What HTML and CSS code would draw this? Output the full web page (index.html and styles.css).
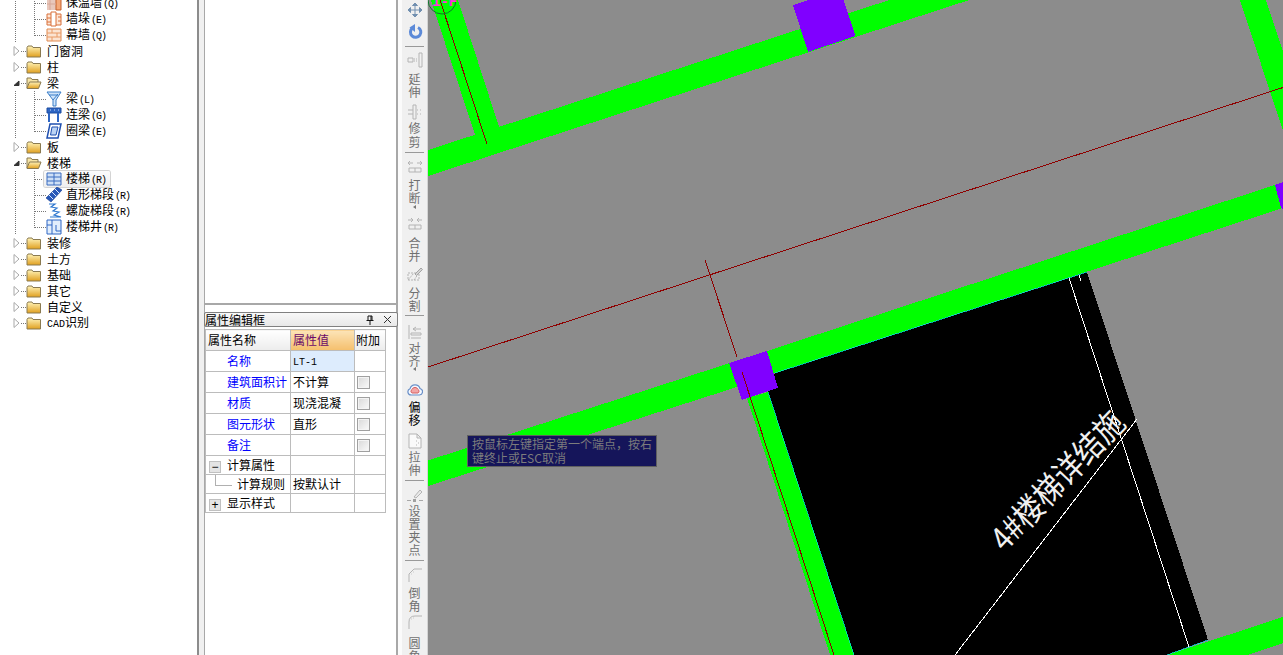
FILE: index.html
```html
<!DOCTYPE html>
<html lang="zh">
<head>
<meta charset="utf-8">
<title>属性编辑框</title>
<link rel="stylesheet" href="styles.css">
</head>
<body>
<svg class="defs" width="0" height="0" aria-hidden="true">
  <defs>
    <linearGradient id="fold" x1="0" y1="0" x2="0" y2="1"><stop offset="0" stop-color="#fff3b8"/><stop offset="1" stop-color="#e0a020"/></linearGradient>
    <symbol id="closed" viewBox="0 0 16 16"><path d="M1 4.500 2 3h4l1 1.500h7.500V14H1z" fill="url(#fold)" stroke="#8a7a50"/></symbol>
    <symbol id="open" viewBox="0 0 16 16"><path d="M1 13V3h4l1 1.500h6V7" fill="#f7e6a8" stroke="#8a7a50"/><path d="M1 13 3.500 7H15l-2.500 6.500H1z" fill="url(#fold)" stroke="#8a7a50"/></symbol>
    <symbol id="tri" viewBox="0 0 7 10"><path d="M1 .5 6 5 1 9.500z" fill="#fff" stroke="#a8a8a8"/></symbol>
    <symbol id="triopen" viewBox="0 0 7 10"><path d="M1 7.500 6 3v4.500z" fill="#333" stroke="#333"/></symbol>
    <symbol id="brick" viewBox="0 0 16 16"><path d="M1 2h14v12H1z" fill="#fbe3d2" stroke="#e08a50"/><path d="M1 6h14M1 10h14M6 2v4M11 6v4M6 10v4" stroke="#e89a66" fill="none"/></symbol>
    <symbol id="pier" viewBox="0 0 16 16"><path d="M1 3h14v11H1z" fill="#fde6d6" stroke="#d9703a"/><path d="M5 1h5v14H5z" fill="#fff" stroke="#d9703a"/><path d="M12 6h3M12 10h3M1 7h4M1 11h4" stroke="#d9703a"/></symbol>
    <symbol id="warm" viewBox="0 0 16 16"><path d="M1 0h9v15H1z" fill="#e8c8bc"/><path d="M10 0h5v15h-5z" fill="#f4a878" stroke="#c4602c"/><path d="M1 4h9M1 9h9M4 0v15" stroke="#d8a898"/></symbol>
    <symbol id="beam" viewBox="0 0 16 16"><path d="M1 1h14L10 9v6H7V9z" fill="#cfe4fa" stroke="#3a7ec8"/><path d="M3 4h9M7 9l5-6" stroke="#3a7ec8" fill="none"/></symbol>
    <symbol id="link" viewBox="0 0 16 16"><path d="M1 1h14v5H1z" fill="#2e66c4" stroke="#1c4ca0"/><path d="M3 6v9M12 6v9" stroke="#2e66c4" stroke-width="2"/><path d="M4 3h1M8 3h1M12 3h1" stroke="#cfe0ff"/></symbol>
    <symbol id="ring" viewBox="0 0 16 16"><path d="M4 1h11l-3 14H1z" fill="#fff" stroke="#2050b0" stroke-width="1.500"/><path d="M6 4h6l-2 8H4.500z" fill="#bcd4f4" stroke="#2050b0"/></symbol>
    <symbol id="stair" viewBox="0 0 16 16"><path d="M1 2h14v12H1z" fill="#cfe0f6" stroke="#3a6cc0"/><path d="M1 6h14M1 10h14M8 2v12" stroke="#3a6cc0" fill="none"/></symbol>
    <symbol id="flight" viewBox="0 0 16 16"><path d="M0 11 11 0l5 3L5 15z" fill="#2858b8" stroke="#143c90" stroke-width=".6"/><path d="M3 8l4 4M6 5l4 4M9 2l4 4" stroke="#dbe8ff"/></symbol>
    <symbol id="spiral" viewBox="0 0 16 16"><path d="M3 1h6L5 4l6 1-4 3 6 1-5 3 7 2H4" fill="none" stroke="#2f78d0" stroke-width="1.200"/></symbol>
    <symbol id="well" viewBox="0 0 16 16"><path d="M1 1h14v14H1z" fill="#e2eefc" stroke="#2e66c4"/><path d="M1 6h5M6 1v14M10 6v6h5" stroke="#2e66c4" fill="none"/></symbol>
  </defs>
</svg>
<div class="app">
  <nav class="tree">
    <div class="row kid"><svg class="ico"><use href="#warm"/></svg><span class="lbl">保温墙<i>(Q)</i></span></div>
    <div class="row kid"><svg class="ico"><use href="#pier"/></svg><span class="lbl">墙垛<i>(E)</i></span></div>
    <div class="row kid last"><svg class="ico"><use href="#brick"/></svg><span class="lbl">幕墙<i>(Q)</i></span></div>
    <div class="row top"><svg class="exp"><use href="#tri"/></svg><svg class="ico"><use href="#closed"/></svg><span class="lbl">门窗洞</span></div>
    <div class="row top"><svg class="exp"><use href="#tri"/></svg><svg class="ico"><use href="#closed"/></svg><span class="lbl">柱</span></div>
    <div class="row top"><svg class="exp"><use href="#triopen"/></svg><svg class="ico"><use href="#open"/></svg><span class="lbl">梁</span></div>
    <div class="row kid"><svg class="ico"><use href="#beam"/></svg><span class="lbl">梁<i>(L)</i></span></div>
    <div class="row kid"><svg class="ico"><use href="#link"/></svg><span class="lbl">连梁<i>(G)</i></span></div>
    <div class="row kid last"><svg class="ico"><use href="#ring"/></svg><span class="lbl">圈梁<i>(E)</i></span></div>
    <div class="row top"><svg class="exp"><use href="#tri"/></svg><svg class="ico"><use href="#closed"/></svg><span class="lbl">板</span></div>
    <div class="row top"><svg class="exp"><use href="#triopen"/></svg><svg class="ico"><use href="#open"/></svg><span class="lbl">楼梯</span></div>
    <div class="row kid"><span class="hi"><svg class="ico"><use href="#stair"/></svg><span class="lbl">楼梯<i>(R)</i></span></span></div>
    <div class="row kid"><svg class="ico"><use href="#flight"/></svg><span class="lbl">直形梯段<i>(R)</i></span></div>
    <div class="row kid"><svg class="ico"><use href="#spiral"/></svg><span class="lbl">螺旋梯段<i>(R)</i></span></div>
    <div class="row kid last"><svg class="ico"><use href="#well"/></svg><span class="lbl">楼梯井<i>(R)</i></span></div>
    <div class="row top"><svg class="exp"><use href="#tri"/></svg><svg class="ico"><use href="#closed"/></svg><span class="lbl">装修</span></div>
    <div class="row top"><svg class="exp"><use href="#tri"/></svg><svg class="ico"><use href="#closed"/></svg><span class="lbl">土方</span></div>
    <div class="row top"><svg class="exp"><use href="#tri"/></svg><svg class="ico"><use href="#closed"/></svg><span class="lbl">基础</span></div>
    <div class="row top"><svg class="exp"><use href="#tri"/></svg><svg class="ico"><use href="#closed"/></svg><span class="lbl">其它</span></div>
    <div class="row top"><svg class="exp"><use href="#tri"/></svg><svg class="ico"><use href="#closed"/></svg><span class="lbl">自定义</span></div>
    <div class="row top"><svg class="exp"><use href="#tri"/></svg><svg class="ico"><use href="#closed"/></svg><span class="lbl"><b>CAD</b>识别</span></div>
  </nav>

  <section class="mid">
    <div class="list"></div>
    <div class="prop">
      <header class="title">
        <span class="title-text">属性编辑框</span>
        <svg class="pin" viewBox="0 0 10 10"><path d="M3 1h4v4.500H3zM1.500 5.500h7M5 5.500V10M6 1v4.500" fill="none" stroke="#111"/></svg>
        <svg class="close" viewBox="0 0 9 9"><path d="M1 1l7 7M8 1 1 8" stroke="#333" fill="none"/></svg>
      </header>
      <table class="grid">
        <thead>
          <tr class="h21"><th class="c1">属性名称</th><th class="c2">属性值</th><th class="c3">附加</th></tr>
        </thead>
        <tbody>
          <tr class="h21"><td class="nm">名称</td><td class="val active"><span class="mono">LT-1</span></td><td></td></tr>
          <tr class="h21"><td class="nm">建筑面积计</td><td class="val">不计算</td><td class="chk"><span class="box"></span></td></tr>
          <tr class="h21"><td class="nm">材质</td><td class="val">现浇混凝</td><td class="chk"><span class="box"></span></td></tr>
          <tr class="h21"><td class="nm">图元形状</td><td class="val">直形</td><td class="chk"><span class="box"></span></td></tr>
          <tr class="h21"><td class="nm">备注</td><td class="val"></td><td class="chk"><span class="box"></span></td></tr>
          <tr class="h19"><td class="grp"><span class="tog">−</span>计算属性</td><td></td><td></td></tr>
          <tr class="h19"><td class="rule">计算规则</td><td class="val">按默认计</td><td></td></tr>
          <tr class="h19"><td class="grp"><span class="tog">+</span>显示样式</td><td></td><td></td></tr>
        </tbody>
      </table>
    </div>
  </section>

  <aside class="bar">
    <svg class="tico t-move" viewBox="0 0 16 16"><path d="M8 1v14M1 8h14M8 1 5.500 3.500h5zM8 15l-2.500-2.500h5zM1 8l2.500-2.500v5zM15 8l-2.500-2.500v5z" fill="#7290b0" stroke="#7290b0"/></svg>
    <svg class="tico t-undo" viewBox="0 0 16 16"><path d="M11 3.500A5.200 5.200 0 1 1 5.500 4" fill="none" stroke="#5c8ad8" stroke-width="3"/><path d="M8 0v8L2.500 3.500z" fill="#5c8ad8"/></svg>
    <hr class="sep s1">
    <div class="tool t1"><svg class="tico" viewBox="0 0 16 16"><path d="M12 1h3v14h-3zM1 6h5v4H1zM7 7h1M9 7h1M7 9h1M9 9h1" fill="none" stroke="#b4b4b4"/></svg><span class="tx">延伸</span></div>
    <div class="tool t2"><svg class="tico" viewBox="0 0 16 16"><path d="M6 1h3v14H6zM1 6h5M1 10h5M10 6h1M13 6h1M10 10h1M13 10h1" fill="none" stroke="#b4b4b4"/></svg><span class="tx">修剪</span></div>
    <hr class="sep s2">
    <div class="tool t3"><svg class="tico" viewBox="0 0 16 16"><path d="M1 4h5M1 4l2-2M1 4l2 2M15 4h-5M15 4l-2-2M15 4l-2 2M2 9h12v4H2zM8 9v4" fill="none" stroke="#b4b4b4"/></svg><span class="tx">打断</span><span class="arr"></span></div>
    <div class="tool t4"><svg class="tico" viewBox="0 0 16 16"><path d="M6 4H1M6 4 4 2M6 4 4 6M10 4h5M10 4l2-2M10 4l2 2M2 9h12v4H2zM8 9v4" fill="none" stroke="#b4b4b4"/></svg><span class="tx">合并</span></div>
    <div class="tool t5"><svg class="tico" viewBox="0 0 16 16"><path d="M1 7h11v7H1zM1 14l6-7M7 14l5-7" fill="none" stroke="#b4b4b4" stroke-dasharray="2 1"/><path d="M8 8l6-6 1.500 1.500-6 6z" fill="#d4d4d4" stroke="#a4a4a4"/></svg><span class="tx">分割</span></div>
    <hr class="sep s3">
    <div class="tool t6"><svg class="tico" viewBox="0 0 16 16"><path d="M2 1v14M4 14h10M4 11h10V9H4zM14 5H6M6 5l3-2M6 5l3 2" fill="none" stroke="#b4b4b4"/></svg><span class="tx">对齐</span><span class="arr a0"></span></div>
    <div class="tool t7"><svg class="tico" viewBox="0 0 16 16"><path d="M4 14a3.200 3.200 0 0 1-1-6.200A5.200 5.200 0 0 1 13 7.500 3.300 3.300 0 0 1 12.500 14z" fill="#f4f8ff" stroke="#6a90c8" stroke-width="1.200"/><path d="M5 12a2 2 0 0 1 0-3.500A3.200 3.200 0 0 1 11 8.500 2 2 0 0 1 11 12z" fill="#f2a6a6" stroke="#d86060"/></svg><span class="tx on">偏移</span></div>
    <div class="tool t8"><svg class="tico" viewBox="0 0 16 16"><path d="M2 1h8l4 4v10H2zM10 1v4h4M9 8h1M11 10h1M9 12h1" fill="#fafafa" stroke="#b4b4b4"/></svg><span class="tx">拉伸</span></div>
    <hr class="sep s4">
    <div class="tool t9"><svg class="tico" viewBox="0 0 16 16"><path d="M0 13.500h4M12 13.500h4" stroke="#a8a8a8"/><path d="M6 12h3v3H6z" fill="#a0a0a0"/><path d="M7 10l6-7 2 2-6 6z" fill="#e8e8e8" stroke="#b4b4b4"/></svg><span class="tx tall">设置夹点</span></div>
    <hr class="sep s5">
    <div class="tool t10"><svg class="tico" viewBox="0 0 16 16"><path d="M2 15V7M7 2h8M2 7l5-5" fill="none" stroke="#b4b4b4"/><path d="M4 7h1M6 5h1" stroke="#ccc"/></svg><span class="tx">倒角</span></div>
    <div class="tool t11"><svg class="tico" viewBox="0 0 16 16"><path d="M2 15V8Q2 2 8 2h7" fill="none" stroke="#b4b4b4"/><path d="M4 5h1M6 4h1" stroke="#ccc"/></svg><span class="tx">圆角</span></div>
  </aside>

  <main class="canvas">
    <svg class="draw" viewBox="428 0 855 655" width="855" height="655">
      <g class="flat">
        <polygon class="black" points="775,373 1087,272 1208,640 1167,655 854,655 768,392"/>
        <polygon class="green" points="428,150 1000,-36 1000,-10 428,176"/>
        <polygon class="green" points="431,0 458,0 499,127 475,135"/>
        <polygon class="green" points="1240,0 1266,0 1283,52 1283,131"/>
        <polygon class="green" points="428,460.500 767,351 1275,185 1283,208 775,373 737,387 428,486"/>
        <polygon class="green" points="747,398 768,392 854,655 830,655"/>
        <polygon class="green" points="1167,655 1283,617 1283,643 1248,655"/>
        <polyline class="cyan" points="775,373 1087,272"/>
        <polyline class="cyan" points="768,392 854,655"/>
        <polyline class="cyan" points="1167,655 1208,640"/>
        <polygon class="purple" points="793,5 840,-10 855.500,36 808,52"/>
        <polygon class="purple" points="729,363 767,351 778,388 742,400"/>
        <polygon class="purple" points="1275,185 1283,182 1283,209 1281,208"/>
        <line class="red" x1="440" y1="0" x2="487" y2="144"/>
        <line class="red" x1="428" y1="367" x2="1283" y2="87.500"/>
        <line class="red" x1="705" y1="260" x2="737" y2="357"/>
        <line class="red" x1="742" y1="372" x2="834" y2="655"/>
        <line class="white" x1="1069" y1="278" x2="1189" y2="647"/>
        <line class="white" x1="1079" y1="275" x2="1081" y2="281"/>
        <line class="white" x1="1137" y1="419" x2="955" y2="655"/>
      </g>
      <circle class="axis" cx="442" cy="0" r="14"/>
      <text class="axis-label" x="432" y="6">1-F</text>
      <text class="stamp" transform="translate(1005 553) rotate(-46.500) scale(1 1.120)">4#楼梯详结施</text>
    </svg>
    <div class="tip">按鼠标左键指定第一个端点，按右键终止或ESC取消</div>
  </main>
</div>
</body>
</html>
```

FILE: styles.css
```css
* { box-sizing: border-box; }
html, body { margin: 0; height: 100%; overflow: hidden; }
body { background: #f0f0f0; font: 12px/16px "Noto Sans CJK SC", "Liberation Sans", sans-serif; color: #000; }
.defs { display: block; height: 0; }
.app { display: grid; grid-template-columns: 199px 199px 30px 855px; height: 655px; overflow: hidden; }

/* tree */
.tree { background: #fff; border-right: 2px solid #8c8c8c; overflow: hidden; height: 655px; }
.row { display: flex; align-items: center; height: 16px; white-space: nowrap; background-repeat: no-repeat; }
.row:first-child { margin-top: -5px; }
.top { padding-left: 13px; background-image: repeating-linear-gradient(to right, #777 0 1px, transparent 1px 2px); background-size: 5px 1px; background-position: 21px 8px; }
.exp { width: 7px; height: 10px; flex: none; margin-right: 6px; }
.top .lbl { margin-left: 5px; }
.ico { width: 16px; height: 16px; flex: none; }
.kid { padding-left: 46px; background-image: repeating-linear-gradient(to bottom, #777 0 1px, transparent 1px 2px), repeating-linear-gradient(to right, #777 0 1px, transparent 1px 2px), repeating-linear-gradient(to bottom, #777 0 1px, transparent 1px 2px); background-size: 1px 16px, 11px 1px, 1px 16px; background-position: 34px 0, 35px 8px, 15px 0; }
.kid.last { background-size: 1px 9px, 11px 1px, 1px 16px; }
.kid .lbl { margin-left: 4px; }
.lbl i { font: normal 10px/16px "Liberation Mono", monospace; letter-spacing: -1px; margin-left: 1px; }
.lbl b { font: normal 10px/16px "Liberation Mono", monospace; }
.hi { display: flex; align-items: center; height: 16px; margin-left: -2px; padding: 0 4px 0 2px; background: linear-gradient(#fbfbfb, #efefef); box-shadow: 0 0 0 1px #d4d4d4; border-radius: 2px; }

/* middle */
.mid { display: flex; flex-direction: column; padding-left: 5px; height: 655px; background: #f0f0f0; }
.list { height: 305px; flex: none; background: #fff; border: solid #a8a8a8; border-width: 0 2px 2px 1px; }
.prop { flex: 1; display: flex; flex-direction: column; background: #fff; border-right: 2px solid #a8a8a8; border-left: 1px solid #a8a8a8; padding-top: 7px; }
.title { display: flex; align-items: center; height: 15px; margin-left: -1px; margin-right: -2px; background: linear-gradient(#f8f8f8, #e8e8e8); border: 1px solid #808080; border-radius: 2px; line-height: 13px; flex: none; }
.title-text { flex: 1; }
.pin { width: 10px; height: 10px; margin-right: 8px; }
.close { width: 9px; height: 9px; margin-right: 5px; }

/* table */
.grid { table-layout: fixed; border-collapse: collapse; width: 180px; margin: 2px 0 0 0; }
.grid th, .grid td { border: 1px solid #bcbcbc; padding: 0; font-weight: normal; text-align: left; line-height: 14px; white-space: nowrap; overflow: hidden; }
.c1 { width: 85px; padding-left: 2px !important; background: linear-gradient(#fff, #ececec); }
.c2 { width: 64px; padding-left: 2px !important; color: #6a0a6a; background: linear-gradient(#fce4b8, #f5bf6c); }
.c3 { width: 31px; padding-left: 1px !important; background: linear-gradient(#fff, #ececec); }
.h21 { height: 21px; }
.h19 { height: 19px; }
.nm { padding-left: 21px !important; color: #0000ff; }
.val { padding-left: 2px !important; }
.active { background: #ddecfd; }
.mono { font: 10px/14px "Liberation Mono", monospace; }
.chk { padding-left: 2px !important; }
.box { display: block; width: 13px; height: 13px; border: 1px solid #a0a0a0; background: linear-gradient(135deg, #d8d8d8, #fafafa); box-shadow: inset 0 0 0 1px #f4f4f4; }
.grp { padding-left: 3px !important; }
.tog { display: inline-block; width: 12px; height: 12px; margin-right: 6px; background: #e4e4e4; border: 1px solid #c0c0c0; text-align: center; font: 12px/10px "Liberation Sans", sans-serif; vertical-align: -1px; }
.rule { padding-left: 31px !important; position: relative; }
.rule::before { content: ""; position: absolute; left: 9px; top: -3px; width: 16px; height: 13px; border-left: 1px solid #b0b0b0; border-bottom: 1px solid #b0b0b0; }

/* toolbar */
.bar { display: flex; flex-direction: column; align-items: center; height: 655px; padding-top: 2px; background: #f0f0f0; border-left: 4px solid #fbfbfb; border-right: 1px solid #d4d4d4; overflow: hidden; }
.tico { display: block; width: 16px; height: 16px; flex: none; }
.t-undo { margin-top: 6px; }
.sep { width: 19px; height: 1px; border: 0; background: #999; margin: 0; flex: none; }
.s1 { margin-top: 6px; }
.tool { display: flex; flex-direction: column; align-items: center; flex: none; }
.tx { display: block; width: 13px; line-height: 13px; font-size: 12px; color: #707070; text-align: center; margin-top: 3px; word-break: break-all; }
.tx.on { color: #000; }
.arr { display: block; width: 0; height: 0; margin-top: 1px; border: 2.500px solid transparent; border-left-width: 0; border-right: 3px solid #777; }
.arr.a0 { margin-top: 0; }
.t1 { margin-top: 5px; }
.t1 .tx { margin-top: 4px; }
.t2 { margin-top: 6px; }
.t2 .tx { margin-top: 1px; line-height: 13.500px; }
.s2 { margin-top: 4px; }
.t3 { margin-top: 6px; }
.t4 { margin-top: 7px; }
.t4 .tx { margin-top: 4px; }
.t5 { margin-top: 4px; }
.t5 .tx { margin-top: 4px; }
.s3 { margin-top: 3px; }
.t6 { margin-top: 8px; }
.t6 .tx { margin-top: 1px; }
.t7 { margin-top: 10px; }
.t7 .tx { margin-top: 3px; }
.t8 { margin-top: 7px; }
.t8 .tx { margin-top: 1px; }
.s4 { margin-top: 4px; }
.t9 { margin-top: 6px; }
.t9 .tx { margin-top: 1px; }
.s5 { margin-top: 4px; }
.t10 { margin-top: 6px; }
.t11 { margin-top: 2px; }
.t11 .tx { margin-top: 6px; }

/* canvas */
.canvas { position: relative; background: #8c8c8c; height: 655px; overflow: hidden; }
.draw { display: block; }
.flat { shape-rendering: crispEdges; }
.black { fill: #000; }
.green { fill: #00ff00; }
.purple { fill: #8000ff; }
.cyan { fill: none; stroke: #00e8e8; stroke-width: .7; }
.red { stroke: #8e0000; stroke-width: 1; }
.white { stroke: #fff; stroke-width: 1; }
.axis { fill: none; stroke: #0a7a28; stroke-width: 1; }
.axis-label { font: bold 14px "Liberation Mono", monospace; fill: #ff30e0; }
.stamp { font: 29px "Noto Sans CJK SC", sans-serif; fill: #f0f0f0; }
.tip { position: absolute; left: 39px; top: 435px; width: 190px; height: 32px; padding: 1px 4px; background: #15155a; border: 1px solid #606060; color: #7c7c7c; font-size: 12px; line-height: 14px; }
```
